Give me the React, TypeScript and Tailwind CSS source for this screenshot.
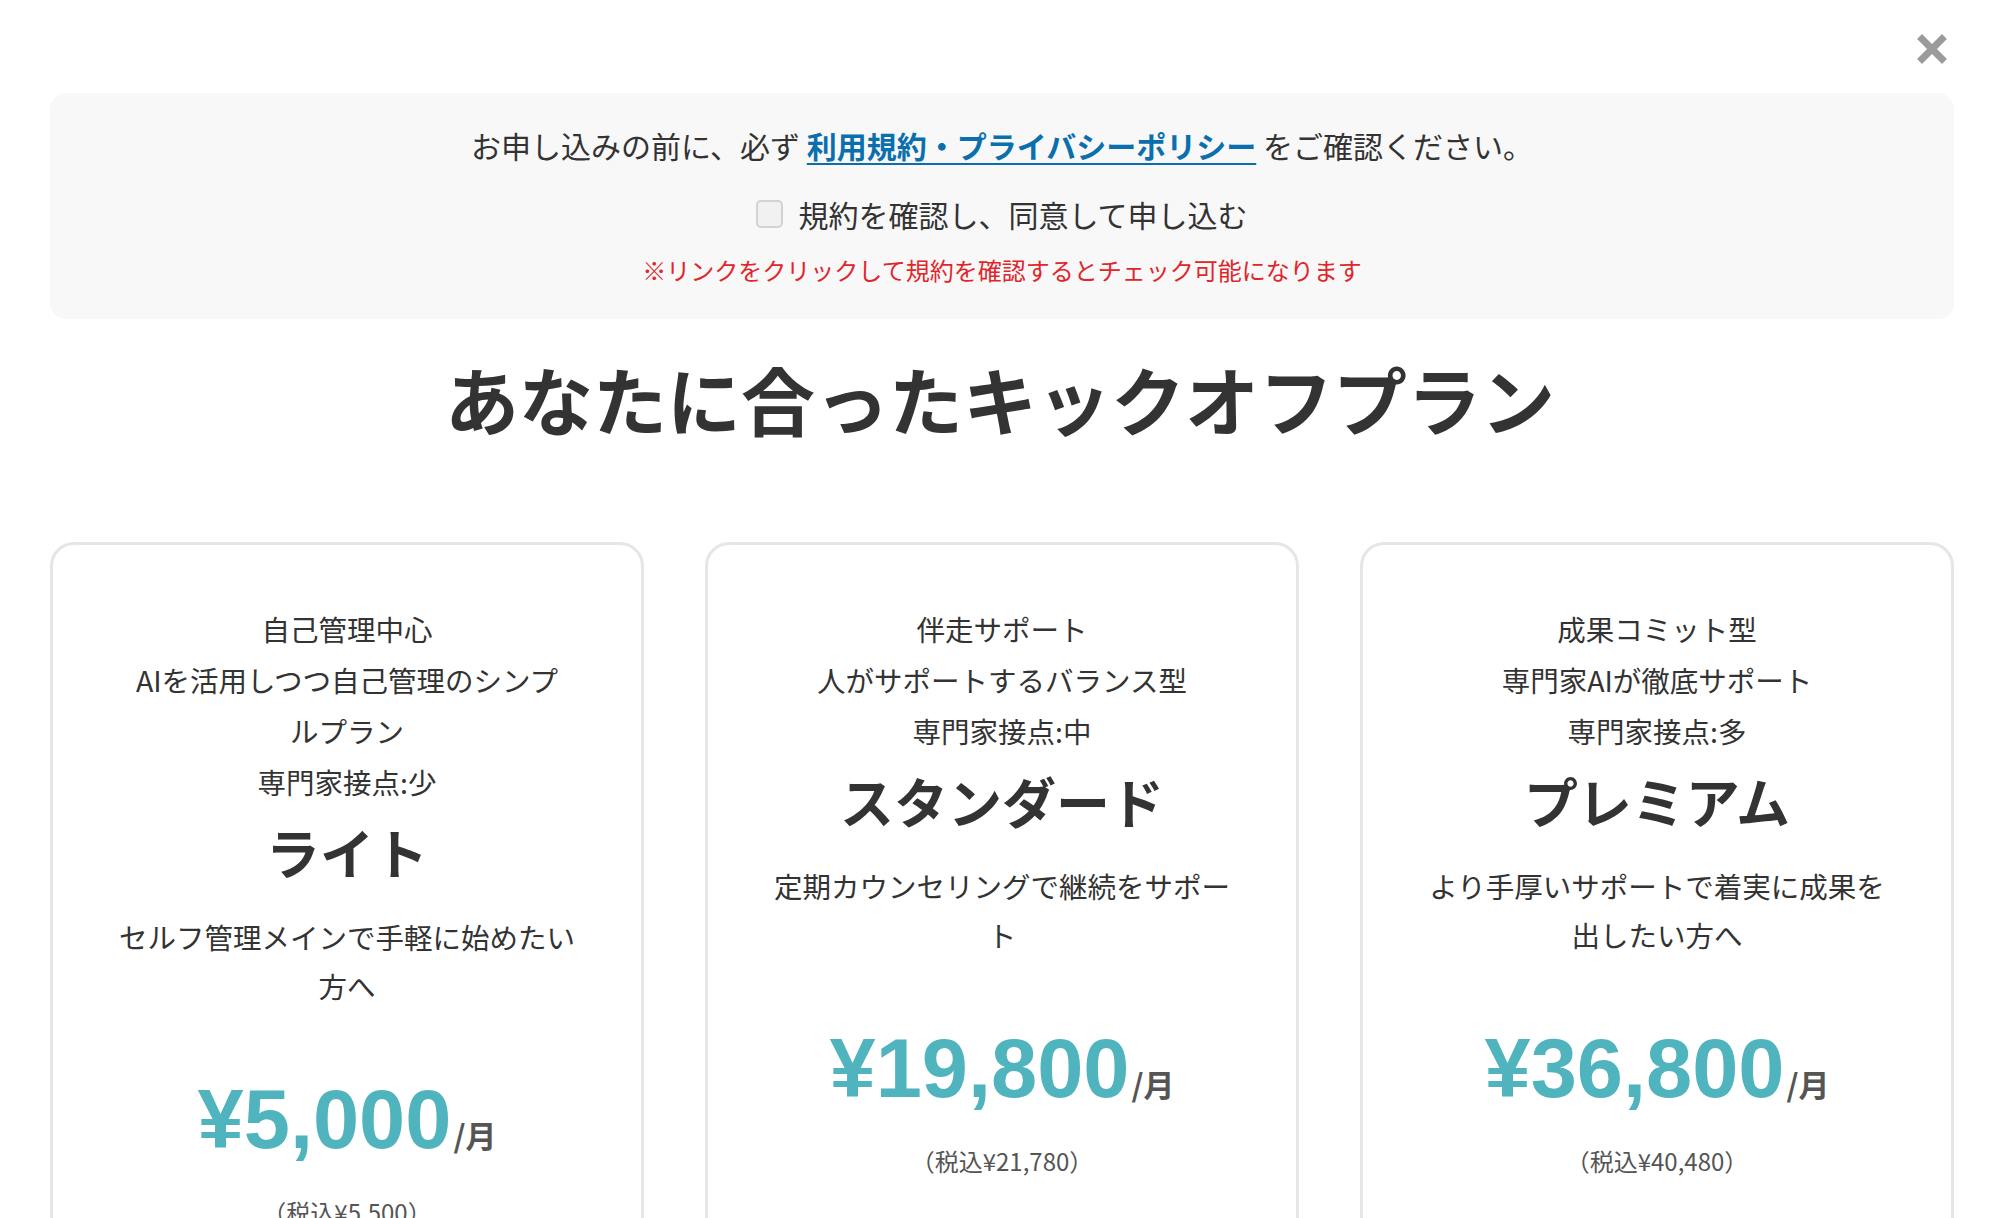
import React from "react";

interface Plan {
  tagline: string[];
  name: string;
  desc: string[];
  price: string;
  taxIncluded: string;
}

const plans: Plan[] = [
  {
    tagline: ["自己管理中心", "AIを活用しつつ自己管理のシンプ", "ルプラン", "専門家接点:少"],
    name: "ライト",
    desc: ["セルフ管理メインで手軽に始めたい", "方へ"],
    price: "¥5,000",
    taxIncluded: "（税込¥5,500）",
  },
  {
    tagline: ["伴走サポート", "人がサポートするバランス型", "専門家接点:中"],
    name: "スタンダード",
    desc: ["定期カウンセリングで継続をサポー", "ト"],
    price: "¥19,800",
    taxIncluded: "（税込¥21,780）",
  },
  {
    tagline: ["成果コミット型", "専門家AIが徹底サポート", "専門家接点:多"],
    name: "プレミアム",
    desc: ["より手厚いサポートで着実に成果を", "出したい方へ"],
    price: "¥36,800",
    taxIncluded: "（税込¥40,480）",
  },
];

export default function App() {
  return (
    <div className="h-screen overflow-hidden bg-white text-[#333] font-['Noto_Sans_CJK_JP','Noto_Sans',sans-serif]">
      {/* Close button */}
      <div className="flex h-[93px] items-start justify-end pr-[52px] pt-[33px]">
        <button aria-label="閉じる" className="h-[32px] w-[32px]">
          <CloseIcon />
        </button>
      </div>

      {/* Terms notice */}
      <div className="ml-[50px] mr-[46px] flex flex-col items-center rounded-2xl bg-[#f8f8f8] pb-[31px] pt-[30px]">
        <p className="text-[30px] leading-[44px]">
          お申し込みの前に、必ず{" "}
          <a
            href="#"
            className="font-bold text-[#0b6fae] underline decoration-2 underline-offset-[5px]"
          >
            利用規約・プライバシーポリシー
          </a>{" "}
          をご確認ください。
        </p>
        <label className="mt-[25px] flex items-center gap-[15px] text-[30px] leading-[44px]">
          <span className="block h-[28px] w-[27px] rounded-[5px] border-2 border-[#d2d2d2] bg-[#f1f1f1]" />
          規約を確認し、同意して申し込む
        </label>
        <p className="mt-[16px] text-[24px] leading-[36px] text-[#e0262a]">
          ※リンクをクリックして規約を確認するとチェック可能になります
        </p>
      </div>

      {/* Heading */}
      <h2 className="mt-[29px] text-center text-[74px] font-bold leading-[100px]">
        あなたに合ったキックオフプラン
      </h2>

      {/* Plan cards */}
      <div className="mt-[94px] grid grid-cols-3 gap-[61px] pl-[50px] pr-[46px]">
        {plans.map((p) => (
          <PlanCard key={p.name} plan={p} />
        ))}
      </div>
    </div>
  );
}

function PlanCard({ plan }: { plan: Plan }) {
  return (
    <div className="flex flex-col items-center rounded-[24px] border-[3px] border-[#e6e6e6] bg-white px-[36px] pb-[60px] pt-[58px] text-center">
      <div className="text-[28.5px] leading-[51px]">
        {plan.tagline.map((line, i) => (
          <p key={i}>{line}</p>
        ))}
      </div>
      <h3 className="mt-[10px] text-[54px] font-bold leading-[70px]">{plan.name}</h3>
      <div className="mt-[25px] text-[28.5px] leading-[49px]">
        {plan.desc.map((line, i) => (
          <p key={i}>{line}</p>
        ))}
      </div>
      <div className="mt-[60px] flex items-baseline justify-center leading-[100px]">
        <span className="font-['Liberation_Sans','Noto_Sans_CJK_JP',sans-serif] text-[83px] font-bold text-[#50b4be]">
          {plan.price}
        </span>
        <span className="ml-[2px] text-[31px] font-bold text-[#555]">/月</span>
      </div>
      <p className="mt-[11px] text-[24px] leading-[32px] text-[#555]">{plan.taxIncluded}</p>
    </div>
  );
}

function CloseIcon() {
  return (
    <svg viewBox="0 0 32 32" className="h-full w-full">
      <path d="M6 6 L26 26 M26 6 L6 26" stroke="#9b9b9b" strokeWidth="7" strokeLinecap="square" fill="none" />
    </svg>
  );
}
